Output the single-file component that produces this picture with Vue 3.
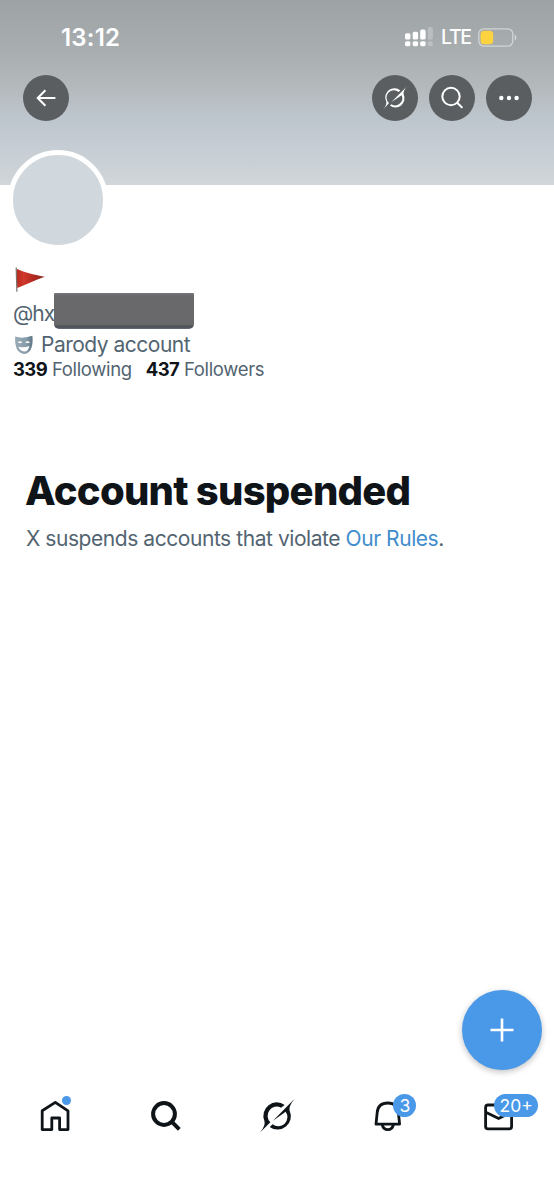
<template>
  <div class="screen">
    <header class="banner">
      <div class="status">
        <span class="time">13:12</span>
        <div class="status-right">
          <svg class="signal" width="28" height="20" viewBox="0 0 28 20" fill="#fff">
            <rect x="0" y="6.2" width="5.4" height="6.4" rx="1.6" />
            <rect x="7.7" y="4.8" width="5.4" height="7.8" rx="1.6" />
            <rect x="15.2" y="2.4" width="5.4" height="10.2" rx="1.6" />
            <rect x="22.8" y="0" width="5" height="12.6" rx="1.6" opacity=".25" />
            <rect x="0" y="14.2" width="5.4" height="5" rx="1.6" />
            <rect x="7.7" y="14.2" width="5.4" height="5" rx="1.6" />
            <rect x="15.2" y="14.2" width="5.4" height="5" rx="1.6" />
            <rect x="22.8" y="14.2" width="5" height="5" rx="1.8" opacity=".25" />
          </svg>
          <span class="network">LTE</span>
          <svg class="battery" width="39" height="19" viewBox="0 0 39 19">
            <rect x=".8" y=".8" width="34" height="17.4" rx="5.2" fill="none" stroke="#fff" stroke-opacity=".5" stroke-width="1.3" />
            <rect x="2.6" y="2.7" width="12.6" height="13.6" rx="3.6" fill="#fcd23e" />
            <path d="M36.8 6.6c2 .9 2 4.9 0 5.8z" fill="#fff" opacity=".6" />
          </svg>
        </div>
      </div>

      <div class="toolbar">
        <button class="round" aria-label="Back">
          <svg width="24" height="24" viewBox="0 0 24 24" fill="none" stroke="#fff" stroke-width="2">
            <path d="M21.4 12H3.500M11.400 4.300 3.700 12l7.700 7.700" />
          </svg>
        </button>
        <div class="actions">
          <button class="round" aria-label="Grok">
            <svg width="24" height="24" viewBox="-54 -54 108 108" fill="#fff">
              <path v-for="d in grokThin" :key="d" :d="d" />
            </svg>
          </button>
          <button class="round" aria-label="Search">
            <svg width="24" height="24" viewBox="0 0 24 24" fill="none" stroke="#fff" stroke-width="2">
              <circle cx="11" cy="10.5" r="8.7" />
              <path d="m17.2 16.7 5.2 5.2" />
            </svg>
          </button>
          <button class="round" aria-label="More">
            <svg width="24" height="24" viewBox="0 0 24 24" fill="#fff">
              <circle cx="4.3" cy="12" r="2.2" />
              <circle cx="12" cy="12" r="2.2" />
              <circle cx="19.6" cy="12" r="2.2" />
            </svg>
          </button>
        </div>
      </div>
    </header>

    <section class="profile">
      <div class="avatar"></div>
      <svg class="flag" width="33" height="26" viewBox="0 0 33 26">
        <defs>
          <linearGradient id="flagRed" x1="0" x2="1">
            <stop offset="0" stop-color="#b92a20" />
            <stop offset=".25" stop-color="#d0382b" />
            <stop offset=".6" stop-color="#b3291f" />
            <stop offset="1" stop-color="#7c2a26" />
          </linearGradient>
        </defs>
        <path d="M3.600 1.800C11 5.400 20 7.600 31.800 9.800 23 12.800 13 17.600 4.200 21z" fill="url(#flagRed)" />
        <path d="M3.200.6 3.900 24.800" stroke="#77736c" stroke-width="1.200" />
      </svg>
      <div class="handle">
        <span class="name">@hx</span>
        <span class="redacted"></span>
      </div>
      <div class="label">
        <svg width="20" height="20" viewBox="0 0 20 20">
          <defs>
            <linearGradient id="mask" x1="0" x2="1">
              <stop offset="0" stop-color="#9aabb5" />
              <stop offset=".65" stop-color="#879ca9" />
              <stop offset="1" stop-color="#5d7482" />
            </linearGradient>
          </defs>
          <path d="M1.2 1.600Q9 4 18.400.8C19.200 9 18 18.600 10 19 2.300 18.400.6 9.500 1.200 1.600z" fill="url(#mask)" />
          <path d="M3.600 7.600q2.200-2.300 4.800-.4-2 1.800-4.800.4M11.200 7.200q2.400-2 4.800.2-2.600 1.500-4.800-.2M4.400 11.500q5.400 2 11-.6-1 5.500-5.200 5.600-4.400-.4-5.800-5" fill="#fff" />
        </svg>
        <span>Parody account</span>
      </div>
      <div class="counts">
        <span v-for="c in counts" :key="c.name" class="count">
          <b>{{ c.value }}</b> <span>{{ c.name }}</span>
        </span>
      </div>
    </section>

    <main class="notice">
      <h1>Account suspended</h1>
      <p>X suspends accounts that violate <a>Our Rules</a>.</p>
    </main>

    <div class="compose-row">
      <button class="compose" aria-label="New post">
        <svg width="24" height="24" viewBox="0 0 24 24" stroke="#fff" stroke-width="2.6">
          <path d="M12 .5v23M.5 12h23" />
        </svg>
      </button>
    </div>

    <nav class="tabs">
      <a class="tab">
        <svg width="36" height="36" viewBox="0 0 36 36" fill="none" stroke="#0f1419" stroke-width="2.8" stroke-linejoin="round">
          <path d="M18.3 4.4 31 12.8v18.800h-8.400V20h-7.800v11.600H5.200V12.800z" />
        </svg>
        <span class="dot"></span>
      </a>
      <a class="tab">
        <svg width="36" height="36" viewBox="0 0 36 36" fill="none" stroke="#0f1419" stroke-width="4">
          <circle cx="16" cy="16" r="10.9" />
          <path d="m23.7 23.7 7.6 7.6" />
        </svg>
      </a>
      <a class="tab">
        <svg width="36" height="36" viewBox="-54 -54 108 108" fill="#0f1419">
          <path v-for="d in grok" :key="d" :d="d" />
        </svg>
      </a>
      <a class="tab">
        <svg width="36" height="36" viewBox="0 0 36 36" fill="none" stroke="#0f1419" stroke-width="2.8" stroke-linejoin="round">
          <path d="M6 26.200 7.200 14.500C7.800 8 12 5 17.800 5s10 3 10.600 9.500l1.200 11.700z" />
          <path d="M12.200 26.600c.7 3.200 2.700 5 5.600 5s4.900-1.800 5.600-5" />
        </svg>
        <span class="badge single">3</span>
      </a>
      <a class="tab">
        <svg width="36" height="36" viewBox="0 0 36 36" fill="none" stroke="#0f1419" stroke-width="2.800">
          <rect x="4.600" y="7" width="26" height="23.800" rx="2.400" />
          <path d="m4.800 14.200 12.800 6.200 12.800-6.200" />
        </svg>
        <span class="badge wide">20+</span>
      </a>
    </nav>
  </div>
</template>

<script setup>
const counts = [
  { value: 339, name: 'Following' },
  { value: 437, name: 'Followers' }
]

const grok = [
  'M-53 52C-44 40-34 28-38 14A40 40 0 0 1 23-33L12-25A27.5 27.5 0 0 0-20 19Z',
  'M52-51L-12 14 26-13A27.5 27.5 0 0 1-13 25L-22 33A40 40 0 0 0 38-16C35-28 44-40 52-51Z'
]

// lighter weight used in the top bar
const grokThin = [
  'M-53 52C-44 40-36 28-40 14A41 41 0 0 1 24-34L16-27A32 32 0 0 0-27 22Z',
  'M52-51L-16 18 30-12A32 32 0 0 1-16 28L-23 34A41 41 0 0 0 39-16C36-28 44-40 52-51Z'
]
</script>

<style>
body { margin: 0; background: #fff; }
</style>

<style scoped>
.screen {
  width: 554px;
  height: 1200px;
  display: flex;
  flex-direction: column;
  background: #fff;
  color: #0f1419;
  font-family: Inter, "Liberation Sans", sans-serif;
  overflow: hidden;
}
button { border: 0; padding: 0; font: inherit; }
svg { display: block; }

.banner {
  flex: none;
  box-sizing: border-box;
  height: 185px;
  padding: 22px 22px 0 22.5px;
  background: linear-gradient(#9da2a5 0, #a8adb0 50px, #b5babd 90px, #bdc5cc 115px, #c5ccd3 145px, #d0d6d9 185px);
}
.status { display: flex; justify-content: space-between; align-items: center; height: 30px; padding: 0 15px 0 38.5px; color: #fff; }
.time { font-size: 24px; font-weight: 600; letter-spacing: 0.2px; }
.status-right { display: flex; align-items: center; }
.network { width: 30px; margin: 0 7px 0 8px; font-size: 19.5px; font-weight: 500; letter-spacing: -1.3px; }
.toolbar { display: flex; justify-content: space-between; margin-top: 23px; }
.actions { display: flex; gap: 11px; }
.round { display: grid; place-items: center; width: 46px; height: 46px; border-radius: 50%; background: #5a5e61; }

.profile { padding-left: 13px; color: #536471; }
.avatar {
  width: 90px;
  height: 90px;
  margin: -35px 0 0 -5px;
  border: 5px solid #fff;
  border-radius: 50%;
  background: #d0d8de;
}
.flag { margin-top: 17px; }
.handle { display: flex; height: 38px; font-size: 21px; line-height: 42px; letter-spacing: -1px; }
.name { width: 40.5px; }
.redacted {
  width: 140px;
  height: 36px;
  background: linear-gradient(#77787c 0, #69696b 3px, #69696b 31px, #4b4d53 34px, #68707e 36px);
  border-radius: 1px 1px 5px 5px;
}
.label { display: flex; align-items: center; gap: 7px; height: 27px; padding-left: 1px; font-size: 21px; line-height: 29px; letter-spacing: -0.5px; }
.counts { display: flex; gap: 14px; height: 22px; font-size: 18.5px; line-height: 22px; letter-spacing: -0.35px; }
.count { white-space: nowrap; }
.count b { color: #0f1419; font-weight: 700; letter-spacing: -0.6px; }

.notice { padding: 86px 26px 0; }
.notice h1 { margin: 0 0 0 -1px; font-size: 40px; line-height: 50px; font-weight: 800; letter-spacing: -0.74px; white-space: nowrap; }
.notice p { margin: 9px 0 0; font-size: 21px; line-height: 28px; letter-spacing: -0.44px; color: #536471; white-space: nowrap; }
.notice a { color: #3f8dcc; }

.compose-row { display: flex; justify-content: flex-end; margin-top: auto; padding-right: 12.5px; }
.compose { display: grid; place-items: center; width: 80px; height: 80px; border-radius: 50%; background: #4a99e9; box-shadow: 0 2px 6px rgba(0, 0, 0, 0.25); }

.tabs { display: flex; height: 92px; padding: 28px 0 10px; }
.tab { position: relative; flex: 1; display: flex; justify-content: center; }
.dot { position: absolute; top: -2px; left: 62px; width: 9px; height: 9px; border-radius: 50%; background: #4a99e9; }
.badge {
  position: absolute;
  top: -4px;
  height: 23px;
  border-radius: 12px;
  background: #4a99e9;
  color: #fff;
  font-size: 17.5px;
  line-height: 23px;
  text-align: center;
}
.single { left: 61px; width: 23px; }
.wide { left: 51px; width: 44px; }
</style>
